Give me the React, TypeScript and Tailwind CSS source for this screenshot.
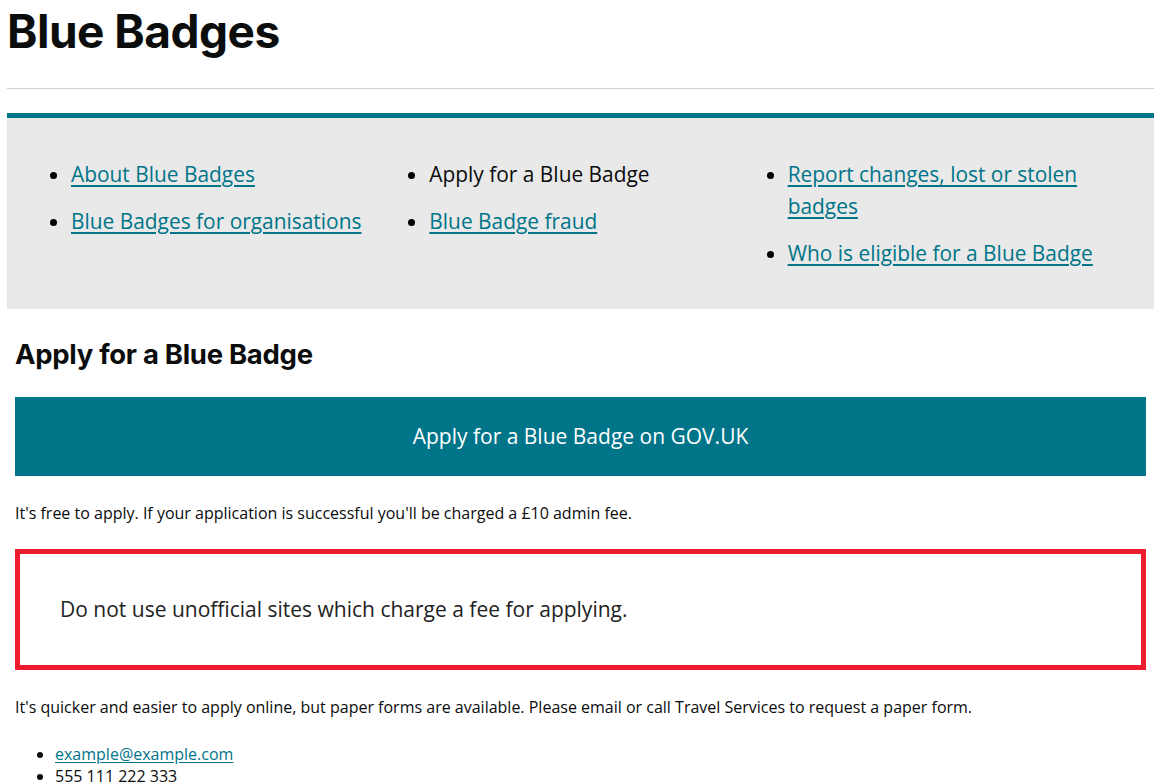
import React from "react";

const navColumns = [
    [
        { label: "About Blue Badges", href: "#" },
        { label: "Blue Badges for organisations", href: "#" },
    ],
    [
        { label: "Apply for a Blue Badge", href: "" },
        { label: "Blue Badge fraud", href: "#" },
    ],
    [
        { label: "Report changes, lost or stolen badges", href: "#" },
        { label: "Who is eligible for a Blue Badge", href: "#" },
    ],
];

const headingFont = "font-['Inter','Lato',sans-serif]";

const App = () => {
    return (
        <div className="px-[7px] bg-white text-[#0b0c0c] font-['Open_Sans',sans-serif]">
            <h1 className={`${headingFont} text-[46px] font-bold leading-[60px] pt-[1px] tracking-[-0.5px]`}>
                Blue Badges
            </h1>
            <hr className="mt-[27px] border-0 border-t border-[#d2d2d2]" />

            <nav className="mt-[24px] border-t-[5px] border-[#00758a] bg-[#e9e9e9] px-[36px] pt-[40px] pb-[25px]">
                <div className="grid grid-cols-3">
                    {navColumns.map((col, i) => (
                        <ul key={i} className="list-disc pl-[28px] text-[20.9px] leading-[32px]">
                            {col.map((item) => (
                                <li key={item.label} className="mb-[15px] pr-[20px] marker:text-black">
                                    {item.href ? (
                                        <a
                                            href={item.href}
                                            className="text-[#00758a] underline underline-offset-[3px] decoration-[2px]"
                                        >
                                            {item.label}
                                        </a>
                                    ) : (
                                        <span className="text-[#0b0c0c]">{item.label}</span>
                                    )}
                                </li>
                            ))}
                        </ul>
                    ))}
                </div>
            </nav>

            <main className="px-[8px]">
                <h2 className={`${headingFont} mt-[27px] text-[27.5px] font-bold leading-[36px] tracking-[-0.3px]`}>
                    Apply for a Blue Badge
                </h2>

                <a
                    href="#"
                    className="mt-[25px] flex h-[79px] items-center justify-center bg-[#00758a] text-[21px] text-white"
                >
                    Apply for a Blue Badge on GOV.UK
                </a>

                <p className="mt-[26px] text-[16px] leading-[22px]">
                    It's free to apply. If your application is successful you'll be charged a £10 admin fee.
                </p>

                <div className="mt-[25px] flex h-[121px] items-center border-[5px] border-[#ed1c2e] pl-[40px]">
                    <p className="text-[21px] text-[#222]">
                        Do not use unofficial sites which charge a fee for applying.
                    </p>
                </div>

                <p className="mt-[26px] text-[16px] leading-[22px]">
                    It's quicker and easier to apply online, but paper forms are available. Please email or call
                    Travel Services to request a paper form.
                </p>

                <ul className="mt-[25px] list-disc pl-[40px] text-[16px] leading-[22px]">
                    <li>
                        <a href="#" className="text-[#00758a] underline underline-offset-2">
                            example@example.com
                        </a>
                    </li>
                    <li>555 111 222 333</li>
                </ul>
            </main>
        </div>
    );
};

export default App;
